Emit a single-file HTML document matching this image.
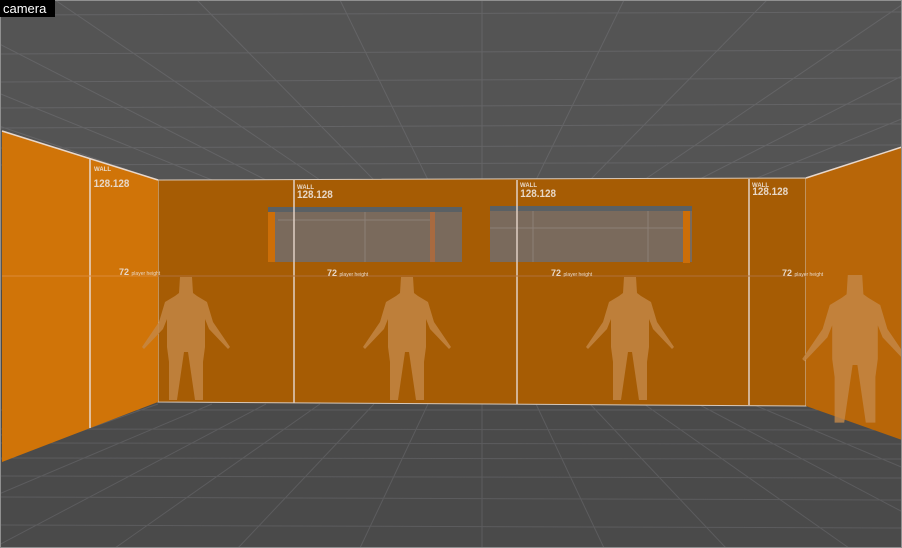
<!DOCTYPE html>
<html><head><meta charset="utf-8"><style>
html,body{margin:0;padding:0;background:#545454;}
svg{display:block}
text{font-family:"Liberation Sans",sans-serif;fill:#e8d8c8}
</style></head><body>
<svg width="902" height="548" viewBox="0 0 902 548" xmlns="http://www.w3.org/2000/svg">
<defs>
<path id="fig" d="M-6,0 h12 l1,16 l4,3 l10,6 l6,20 l17,25 l-2,2 l-19,-20 l-4,-10 v28 l-2,15 v38 h-8 l-7,-48 h-4 l-7,48 h-8 v-38 l-2,-15 v-28 l-4,10 l-19,20 l-2,-2 l17,-25 l6,-20 l10,-6 l4,-3 z"/>
</defs>
<rect x="0" y="0" width="902" height="290" fill="#545454"/>
<rect x="0" y="290" width="902" height="258" fill="#4a4a4a"/>
<g stroke="#646466" stroke-width="1" fill="none">
<line x1="0" y1="15" x2="902" y2="12"/>
<line x1="0" y1="54" x2="902" y2="50"/>
<line x1="0" y1="82" x2="902" y2="78"/>
<line x1="0" y1="108" x2="902" y2="104"/>
<line x1="0" y1="128" x2="902" y2="124"/>
<line x1="0" y1="148" x2="902" y2="145"/>
<line x1="0" y1="165" x2="902" y2="162"/>
<line x1="158" y1="180" x2="-372" y2="0"/>
<line x1="212" y1="180" x2="-230" y2="0"/>
<line x1="266" y1="180" x2="-87" y2="0"/>
<line x1="320" y1="180" x2="55" y2="0"/>
<line x1="374" y1="180" x2="197" y2="0"/>
<line x1="428" y1="180" x2="340" y2="0"/>
<line x1="482" y1="180" x2="482" y2="0"/>
<line x1="536" y1="180" x2="624" y2="0"/>
<line x1="590" y1="180" x2="767" y2="0"/>
<line x1="644" y1="180" x2="909" y2="0"/>
<line x1="698" y1="180" x2="1051" y2="0"/>
<line x1="752" y1="180" x2="1193" y2="0"/>
</g>
<g stroke="#5c5c5e" stroke-width="1" fill="none">
<line x1="0" y1="410" x2="902" y2="410"/>
<line x1="0" y1="429" x2="902" y2="430"/>
<line x1="0" y1="443" x2="902" y2="444"/>
<line x1="0" y1="458" x2="902" y2="459"/>
<line x1="0" y1="476" x2="902" y2="478"/>
<line x1="0" y1="497" x2="902" y2="500"/>
<line x1="0" y1="525" x2="902" y2="528"/>
<line x1="104" y1="404" x2="-373" y2="548"/>
<line x1="158" y1="404" x2="-251" y2="548"/>
<line x1="212" y1="404" x2="-129" y2="548"/>
<line x1="266" y1="404" x2="-7" y2="548"/>
<line x1="320" y1="404" x2="115" y2="548"/>
<line x1="374" y1="404" x2="238" y2="548"/>
<line x1="428" y1="404" x2="360" y2="548"/>
<line x1="482" y1="404" x2="482" y2="548"/>
<line x1="536" y1="404" x2="604" y2="548"/>
<line x1="590" y1="404" x2="726" y2="548"/>
<line x1="644" y1="404" x2="849" y2="548"/>
<line x1="698" y1="404" x2="971" y2="548"/>
<line x1="752" y1="404" x2="1093" y2="548"/>
</g>
<polygon points="158,180 806,178 806,406 158,402" fill="#a65c04" stroke="#d8c8b8" stroke-width="1"/>
<rect x="268" y="207" width="194" height="55" fill="#7a6a5c"/>
<rect x="268" y="207" width="194" height="5" fill="#5a6064"/>
<rect x="268" y="212" width="7" height="50" fill="#cc6e08"/>
<rect x="430" y="212" width="5" height="50" fill="#a86a40"/>
<rect x="490" y="206" width="202" height="56" fill="#7a6a5c"/>
<rect x="490" y="206" width="202" height="5" fill="#5a6064"/>
<rect x="683" y="211" width="7" height="52" fill="#cc6e08"/>
<g stroke="#8c8076" stroke-width="1">
<line x1="278" y1="220" x2="430" y2="220"/><line x1="365" y1="212" x2="365" y2="262"/>
<line x1="490" y1="228" x2="683" y2="228"/><line x1="533" y1="211" x2="533" y2="262"/><line x1="648" y1="211" x2="648" y2="262"/>
</g>
<g stroke="#e0d0c4" stroke-width="1.5">
<line x1="294" y1="180" x2="294" y2="403"/>
<line x1="517" y1="180" x2="517" y2="404"/>
<line x1="749" y1="179" x2="749" y2="405"/>
</g>
<line x1="158" y1="276" x2="806" y2="276" stroke="#b0713a" stroke-width="1"/>
<polygon points="2,131 158,180 158,402 2,462" fill="#d07408"/>
<line x1="2" y1="131" x2="158" y2="180" stroke="#e8d8cc" stroke-width="1.5"/>
<line x1="90" y1="159" x2="90" y2="428" stroke="#e8d8cc" stroke-width="1.5"/>
<line x1="2" y1="276" x2="158" y2="276" stroke="#dc8a38" stroke-width="1"/>
<polygon points="806,178 902,147 902,440 806,406" fill="#b86608"/>
<line x1="806" y1="178" x2="902" y2="147" stroke="#e8d8cc" stroke-width="1.5"/>
<g fill="#c48848" fill-opacity="0.8">
<use href="#fig" transform="translate(186,277)"/>
<use href="#fig" transform="translate(407,277)"/>
<use href="#fig" transform="translate(630,277)"/>
<use href="#fig" transform="translate(855,275) scale(1.2)"/>
</g>
<g font-size="6" font-weight="bold"><text x="94" y="171">WALL</text><text x="297" y="189">WALL</text><text x="520" y="187">WALL</text><text x="752" y="187">WALL</text></g>
<g font-size="11" font-weight="bold" transform="scale(0.9,1)"><text x="104" y="187">128.128</text><text x="330" y="198">128.128</text><text x="578" y="197">128.128</text><text x="836" y="195">128.128</text></g>
<g font-size="9" font-weight="bold"><text x="119" y="275">72 <tspan font-size="5" font-weight="normal">player height</tspan></text>
<text x="327" y="276">72 <tspan font-size="5" font-weight="normal">player height</tspan></text>
<text x="551" y="276">72 <tspan font-size="5" font-weight="normal">player height</tspan></text>
<text x="782" y="276">72 <tspan font-size="5" font-weight="normal">player height</tspan></text></g>
<rect x="0.5" y="0.5" width="901" height="547" fill="none" stroke="#909090" stroke-width="1"/>
<rect x="0" y="0" width="55" height="17" fill="#000"/>
<text x="3" y="13" font-size="13" style="fill:#fff">camera</text>
</svg>
</body></html>
